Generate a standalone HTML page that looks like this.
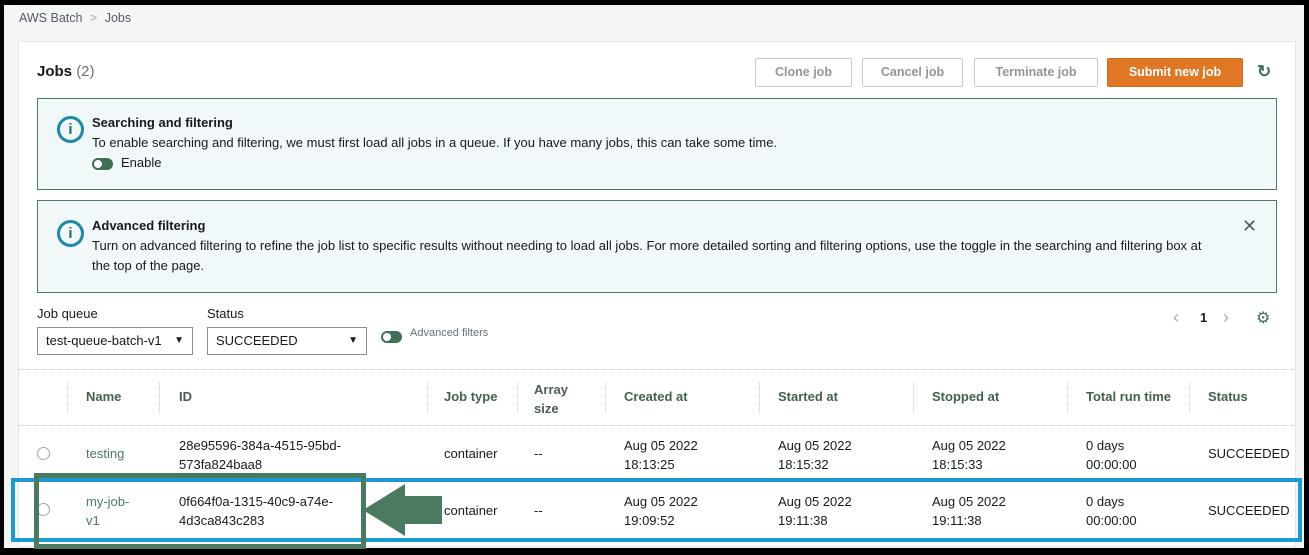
<!DOCTYPE html>
<html><head><meta charset="utf-8"><style>
*{margin:0;padding:0;box-sizing:border-box}
body{width:1309px;height:555px;background:#000;position:relative;overflow:hidden;font-family:"Liberation Sans",sans-serif;font-size:13px;color:#16191f}
.a{position:absolute;white-space:nowrap}
.h{color:#46604f;font-weight:bold}
.lk{color:#4a7a5f}
.btn{position:absolute;height:29px;top:58px;border:1px solid #c6cccc;background:#fff;color:#8f9898;font-weight:bold;font-size:12.5px;text-align:center;line-height:27px;border-radius:2px}
.info{position:absolute;left:37px;width:1240px;background:#f1f8fa;border:1px solid #4a7a5f}
.ic{position:absolute;left:57px;width:27px;height:27px;border-radius:50%;border:3px solid #1b8aa8;color:#1b6b6b;font-weight:bold;text-align:center;line-height:21px;font-size:15px}
.sel{position:absolute;top:327px;height:28px;border:1px solid #8a9292;background:#fff;padding-left:8px;line-height:26px}
.sep{position:absolute;top:383px;width:0;height:30px;border-left:1px dotted #ccd}
.rad{position:absolute;width:13px;height:13px;border-radius:50%;border:1px solid #9aa;background:#fff}
.tog{position:absolute;width:21px;height:12px;border-radius:6px;background:#3f6f55}
.tog:after{content:"";position:absolute;left:2px;top:2px;width:8px;height:8px;border-radius:50%;background:#fff}
</style></head><body>
<div class="a" style="left:4px;top:5px;width:1300px;height:543px;background:#f4f6f6"></div>
<div class="a" style="left:19px;top:11px;color:#545b64;font-size:12.5px">AWS Batch <span style="color:#aab;margin:0 4px">&gt;</span> Jobs</div>
<div class="a" style="left:18px;top:41px;width:1278px;height:506px;background:#fff;border:1px solid #e4e8e8"></div>
<div class="a" style="left:37px;top:63px;font-size:15px;font-weight:bold">Jobs <span style="font-weight:normal;color:#687078">(2)</span></div>
<div class="btn" style="left:755px;width:97px">Clone job</div>
<div class="btn" style="left:862px;width:101px">Cancel job</div>
<div class="btn" style="left:974px;width:124px">Terminate job</div>
<div class="btn" style="left:1107px;width:136px;background:#e07725;border-color:#d06a1c;color:#fff">Submit new job</div>
<div class="a" style="left:1257px;top:62px;font-size:17px;color:#3f6f55;font-weight:bold">&#x21bb;</div>

<div class="info" style="top:98px;height:92px"></div>
<div class="ic" style="top:116px">i</div>
<div class="a" style="left:92px;top:115px;font-weight:bold">Searching and filtering</div>
<div class="a" style="left:92px;top:135px">To enable searching and filtering, we must first load all jobs in a queue. If you have many jobs, this can take some time.</div>
<div class="tog" style="left:92px;top:158px"></div>
<div class="a" style="left:121px;top:155px">Enable</div>

<div class="info" style="top:200px;height:93px"></div>
<div class="ic" style="top:220px">i</div>
<div class="a" style="left:92px;top:218px;font-weight:bold">Advanced filtering</div>
<div class="a" style="left:92px;top:236px;white-space:normal;width:1125px;line-height:20px">Turn on advanced filtering to refine the job list to specific results without needing to load all jobs. For more detailed sorting and filtering options, use the toggle in the searching and filtering box at the top of the page.</div>
<div class="a" style="left:1242px;top:216px;font-size:18px;color:#545b64">&#x2715;</div>

<div class="a" style="left:37px;top:306px">Job queue</div>
<div class="a" style="left:207px;top:306px">Status</div>
<div class="sel" style="left:37px;width:156px">test-queue-batch-v1<span style="position:absolute;right:8px;font-size:10px">&#9660;</span></div>
<div class="sel" style="left:207px;width:160px">SUCCEEDED<span style="position:absolute;right:8px;font-size:10px">&#9660;</span></div>
<div class="tog" style="left:381px;top:331px"></div>
<div class="a" style="left:410px;top:327px;font-size:11px;color:#687078">Advanced filters</div>
<div class="a" style="left:1173px;top:307px;font-size:18px;color:#aab">&#x2039;</div>
<div class="a" style="left:1200px;top:310px;font-weight:bold">1</div>
<div class="a" style="left:1223px;top:307px;font-size:18px;color:#aab">&#x203a;</div>
<div class="a" style="left:1256px;top:308px;font-size:16px;color:#3f6f55">&#9881;</div>

<div class="a" style="left:18px;top:369px;width:1278px;border-top:1px dotted #ccd"></div>
<div class="a" style="left:18px;top:425px;width:1278px;border-top:1px dotted #ccd"></div>
<div class="a" style="left:18px;top:481px;width:1278px;border-top:1px dotted #ccd"></div>
<div class="sep" style="left:67px"></div><div class="sep" style="left:159px"></div><div class="sep" style="left:427px"></div><div class="sep" style="left:517px"></div><div class="sep" style="left:605px"></div><div class="sep" style="left:759px"></div><div class="sep" style="left:913px"></div><div class="sep" style="left:1067px"></div><div class="sep" style="left:1189px"></div>
<div class="a h" style="left:86px;top:389px">Name</div>
<div class="a h" style="left:179px;top:389px">ID</div>
<div class="a h" style="left:444px;top:389px">Job type</div>
<div class="a h" style="left:534px;top:380px;line-height:19px">Array<br>size</div>
<div class="a h" style="left:624px;top:389px">Created at</div>
<div class="a h" style="left:778px;top:389px">Started at</div>
<div class="a h" style="left:932px;top:389px">Stopped at</div>
<div class="a h" style="left:1086px;top:389px">Total run time</div>
<div class="a h" style="left:1208px;top:389px">Status</div>

<div class="rad" style="left:37px;top:447px"></div>
<div class="a lk" style="left:86px;top:446px">testing</div>
<div class="a" style="left:179px;top:436px;line-height:19px">28e95596-384a-4515-95bd-<br>573fa824baa8</div>
<div class="a" style="left:444px;top:446px">container</div>
<div class="a" style="left:534px;top:446px">--</div>
<div class="a" style="left:624px;top:436px;line-height:19px">Aug 05 2022<br>18:13:25</div>
<div class="a" style="left:778px;top:436px;line-height:19px">Aug 05 2022<br>18:15:32</div>
<div class="a" style="left:932px;top:436px;line-height:19px">Aug 05 2022<br>18:15:33</div>
<div class="a" style="left:1086px;top:436px;line-height:19px">0 days<br>00:00:00</div>
<div class="a" style="left:1208px;top:446px">SUCCEEDED</div>

<div class="rad" style="left:37px;top:503px"></div>
<div class="a lk" style="left:86px;top:492px;line-height:19px">my-job-<br>v1</div>
<div class="a" style="left:179px;top:492px;line-height:19px">0f664f0a-1315-40c9-a74e-<br>4d3ca843c283</div>
<div class="a" style="left:444px;top:503px">container</div>
<div class="a" style="left:534px;top:503px">--</div>
<div class="a" style="left:624px;top:492px;line-height:19px">Aug 05 2022<br>19:09:52</div>
<div class="a" style="left:778px;top:492px;line-height:19px">Aug 05 2022<br>19:11:38</div>
<div class="a" style="left:932px;top:492px;line-height:19px">Aug 05 2022<br>19:11:38</div>
<div class="a" style="left:1086px;top:492px;line-height:19px">0 days<br>00:00:00</div>
<div class="a" style="left:1208px;top:503px">SUCCEEDED</div>

<div class="a" style="left:11px;top:478px;width:1291px;height:64px;border:4px solid #1b9bd1"></div>
<div class="a" style="left:34px;top:473px;width:332px;height:76px;border:5px solid #4a7a5f"></div>
<svg class="a" style="left:360px;top:480px" width="86" height="60"><polygon points="3,30 45,4 45,16 82,16 82,44 45,44 45,56" fill="#4a7a5f"/></svg>
</body></html>
